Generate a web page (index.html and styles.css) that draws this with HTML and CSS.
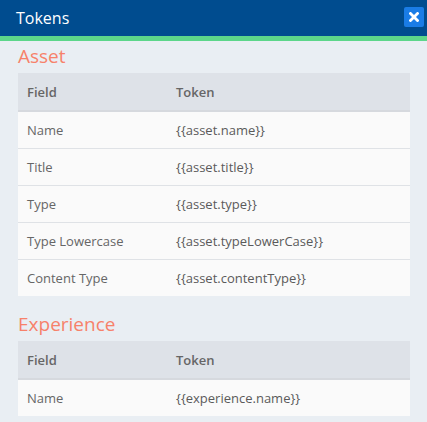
FILE: index.html
```html
<!DOCTYPE html>
<html>
<head>
<meta charset="utf-8">
<link rel="stylesheet" href="styles.css">
</head>
<body>
<div class="dialog">
  <header class="titlebar">
    <h1 class="title">Tokens</h1>
    <button class="close" aria-label="Close">
      <svg width="10" height="10" viewBox="0 0 10 10"><path d="M1.5 1.5 L8.5 8.5 M8.5 1.5 L1.5 8.5" stroke="#fff" stroke-width="2.8" stroke-linecap="square"/></svg>
    </button>
  </header>
  <main class="content">
    <section class="group">
      <h2 class="group-title">Asset</h2>
      <table class="tokens">
        <thead><tr><th class="col-field">Field</th><th>Token</th></tr></thead>
        <tbody>
          <tr><td>Name</td><td class="tok">{{asset.name}}</td></tr>
          <tr><td>Title</td><td class="tok">{{asset.title}}</td></tr>
          <tr><td>Type</td><td class="tok">{{asset.type}}</td></tr>
          <tr><td>Type Lowercase</td><td class="tok">{{asset.typeLowerCase}}</td></tr>
          <tr><td>Content Type</td><td class="tok">{{asset.contentType}}</td></tr>
        </tbody>
      </table>
    </section>
    <section class="group">
      <h2 class="group-title">Experience</h2>
      <table class="tokens">
        <thead><tr><th class="col-field">Field</th><th>Token</th></tr></thead>
        <tbody>
          <tr><td>Name</td><td class="tok">{{experience.name}}</td></tr>
        </tbody>
      </table>
    </section>
  </main>
</div>
</body>
</html>
```
FILE: styles.css
```css
html, body {
  margin: 0;
  padding: 0;
  background: #e9eef3;
  font-family: "Open Sans", "Noto Sans", sans-serif;
}
.dialog {
  width: 427px;
  height: 422px;
  overflow: hidden;
  background: #e9eef3;
}
.titlebar {
  height: 36px;
  background: #004c8f;
  border-bottom: 5px solid #5cd68a;
  display: flex;
  align-items: center;
  justify-content: space-between;
  padding: 0 3px 0 16px;
  box-sizing: content-box;
}
.title {
  margin: 0;
  font-size: 16px;
  font-weight: 400;
  color: #fff;
}
.close {
  width: 20px;
  height: 20px;
  padding: 0;
  border: none;
  border-radius: 2px;
  background: #1a7ce6;
  display: flex;
  align-items: center;
  justify-content: center;
  margin-top: -2px;
}
.content {
  padding: 0 17px 0 18px;
}
.group-title {
  margin: 0;
  font-size: 19px;
  font-weight: 400;
  color: #f7816a;
  line-height: 30px;
  height: 32px;
}
.group + .group .group-title {
  margin-top: 13px;
}
.tokens {
  width: 100%;
  border-collapse: collapse;
  font-size: 13px;
}
.tokens th {
  text-align: left;
  font-weight: 600;
  color: #666;
  background: #dee2e8;
  height: 37px;
  padding: 0 9px;
  border-bottom: 2px solid #d6d9de;
}
.tokens .col-field {
  width: 131px;
}
.tokens td {
  background: #fafafa;
  color: #666;
  height: 36px;
  padding: 0 9px;
  border-top: 1px solid #dfe2e6;
}
.tokens tbody tr:first-child td {
  border-top: none;
}
.tokens .tok {
  color: #5a5a5a;
}
```
